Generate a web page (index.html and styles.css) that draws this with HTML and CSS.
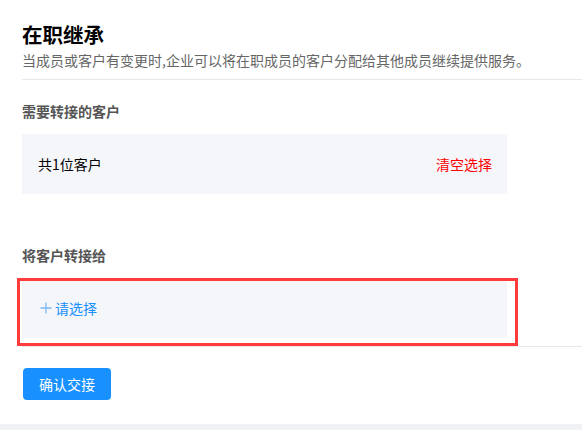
FILE: index.html
```html
<!DOCTYPE html>
<html lang="zh-CN">
<head>
  <meta charset="UTF-8">
  <meta name="viewport" content="width=device-width, initial-scale=1.0">
  <title>在职继承</title>
  <link rel="stylesheet" href="styles.css">
</head>
<body>

  <div class="card">

    <div class="header">
      <h1>在职继承</h1>
      <p>当成员或客户有变更时,企业可以将在职成员的客户分配给其他成员继续提供服务。</p>
    </div>

    <div class="section">
      <div class="label">需要转接的客户</div>
      <div class="box">
        <span class="count">共1位客户</span>
        <span class="clear">清空选择</span>
      </div>
    </div>

    <div class="section section-last">
      <div class="label label-gap">将客户转接给</div>
      <div class="box box-pick">
        <span class="pick">
          <svg width="12" height="12" viewBox="0 0 12 12"><path d="M6 0.5V11.5M0.5 6H11.5" stroke="#7ab8f2" stroke-width="1.3"/></svg>
          请选择
        </span>
        <div class="mark"></div>
      </div>
    </div>

    <div class="footer">
      <button class="btn">确认交接</button>
    </div>

  </div>

</body>
</html>
```

FILE: styles.css
```css
body {
  margin: 0;
  background-color: #f0f2f5;
  font-family: 'Noto Sans CJK SC', 'Noto Sans', sans-serif;
}

.card {
  background-color: #fff;
  padding: 20px 0 23px 22px;
  height: 424px;
  box-sizing: border-box;
}

.header {
  border-bottom: 1px solid #e8e8e8;
  padding-bottom: 8px;
}

.header h1 {
  margin: 0;
  font-size: 20.5px;
  line-height: 28px;
  font-weight: 700;
  color: #000;
}

.header p {
  margin: 1px 0 0;
  font-size: 14px;
  line-height: 22px;
  color: #666;
}

.section {
  padding-top: 20px;
}

.section-last {
  padding-top: 0;
  padding-bottom: 8px;
  border-bottom: 1px solid #e8e8e8;
}

.label {
  font-size: 14px;
  line-height: 22px;
  font-weight: 600;
  color: #555;
  margin-bottom: 12px;
}

.label-gap {
  margin-top: 50px;
}

.box {
  width: 485px;
  height: 60px;
  background-color: #f5f6fa;
  display: flex;
  align-items: center;
  justify-content: space-between;
  padding: 0 15px 0 16px;
  box-sizing: border-box;
  font-size: 14px;
}

.count {
  color: #000;
}

.clear {
  color: #ff0000;
}

.box-pick {
  position: relative;
  padding-left: 18px;
}

.pick {
  display: flex;
  align-items: center;
  gap: 3px;
  color: #1890ff;
}

/* red annotation frame */
.mark {
  position: absolute;
  left: -5px;
  right: -11px;
  top: 0;
  bottom: -8px;
  border: 3px solid #ff3b3b;
}

.footer {
  padding-top: 21px;
}

.btn {
  background-color: #1890ff;
  color: #fff;
  font-family: inherit;
  font-size: 14px;
  height: 32px;
  padding: 0 16px;
  margin-left: 1px;
  border: none;
  border-radius: 4px;
  cursor: pointer;
}
```
